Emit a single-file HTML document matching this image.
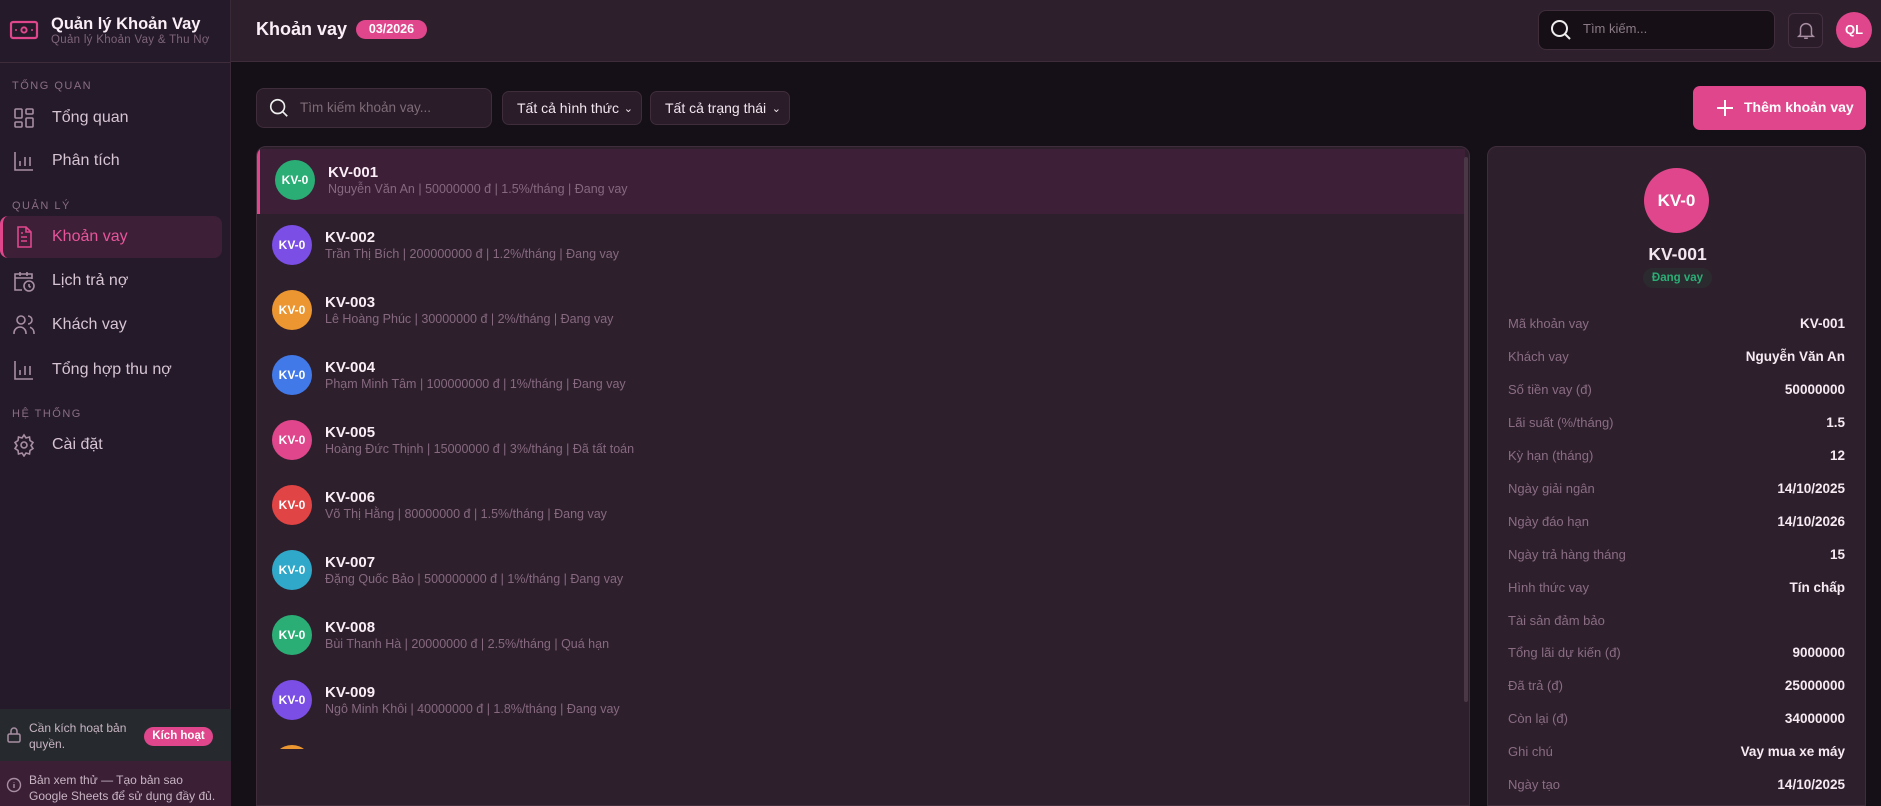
<!DOCTYPE html>
<html style="overflow:hidden;height:806px"><head><meta charset="utf-8"><style>
*{box-sizing:border-box;margin:0;padding:0}
body{width:1881px;height:806px;overflow:hidden;background:#151017;font-family:"Liberation Sans","DejaVu Sans",sans-serif;color:#f3e6ef;position:relative}
.abs{position:absolute}
.side{left:0;top:0;width:231px;height:806px;background:#241a2a;border-right:1px solid #3a2a38}
.sec{position:absolute;left:12px;font-size:11px;letter-spacing:1.5px;color:#8a6d83}
.nav{position:absolute;left:12px;font-size:16px;color:#d7c4d2;display:flex;align-items:center;gap:16px}
.nav svg{width:24px;height:24px;fill:none;stroke:#a88ea2;stroke-width:1.6}
.hdr{left:231px;top:0;width:1650px;height:62px;background:#2e1f2d;border-bottom:1px solid #3e2c3b}
.inp{background:#2a1c29;border:1px solid #3f2d3c;border-radius:8px}
.sel{background:#2a1c29;border:1px solid #3f2d3c;border-radius:7px;font-size:14px;color:#f3e6ef;display:flex;align-items:center;padding-left:14px}
.panel{background:#2e1f2d;border:1px solid #3f2d3c;border-radius:10px}
.row{position:absolute;left:0;width:1208px;height:65px}
.av{position:absolute;width:40px;height:40px;border-radius:50%;color:#fff;font-weight:bold;font-size:12px;display:flex;align-items:center;justify-content:center}
.t1{position:absolute;font-weight:bold;font-size:15px;color:#fbeef6}
.t2{position:absolute;font-size:12.5px;color:#86697f}
.dl{position:absolute;left:20px;font-size:13px;color:#8a6d83}
.dv{position:absolute;right:20px;font-size:13.5px;font-weight:bold;color:#f7eaf2}
</style></head><body>
<div class="abs side">
 <svg class="abs" style="left:9px;top:19px" width="30" height="22" viewBox="0 0 30 22"><rect x="2" y="3" width="26" height="16" rx="2" fill="none" stroke="#e0468c" stroke-width="2.2"/><circle cx="15" cy="11" r="2.6" fill="none" stroke="#e0468c" stroke-width="2"/><circle cx="7" cy="11" r="1" fill="#e0468c"/><circle cx="23" cy="11" r="1" fill="#e0468c"/></svg>
 <div class="abs" style="left:51px;top:15px;font-size:16.5px;font-weight:bold;color:#fbeef6">Quản lý Khoản Vay</div>
 <div class="abs" style="left:51px;top:34px;font-size:11.5px;color:#7e6478;letter-spacing:0.3px">Quản lý Khoản Vay &amp; Thu Nợ</div>
 <div class="abs" style="left:0;top:62px;width:231px;border-top:1px solid #3e2c3b"></div>
 <div class="sec" style="top:80px">TỔNG QUAN</div>
 <div class="nav" style="top:106px"><svg viewBox="0 0 24 24"><rect x="3" y="3" width="7" height="9" rx="1"/><rect x="14" y="3" width="7" height="5" rx="1"/><rect x="14" y="12" width="7" height="9" rx="1"/><rect x="3" y="16" width="7" height="5" rx="1"/></svg>Tổng quan</div>
 <div class="nav" style="top:149px"><svg viewBox="0 0 24 24"><path d="M3 3v18h18M8 17v-5M13 17V8M18 17v-9"/></svg>Phân tích</div>
 <div class="sec" style="top:200px">QUẢN LÝ</div>
 <div class="abs" style="left:0;top:216px;width:222px;height:42px;background:#3d1f38;border-radius:8px;border-left:3px solid #e0468c"></div>
 <div class="nav" style="top:225px;color:#e8559a"><svg viewBox="0 0 24 24" style="stroke:#e0468c"><path d="M6 2h8l5 5v15H6zM14 2v5h5M9 12h6M9 16h6M9 8h2"/></svg>Khoản vay</div>
 <div class="nav" style="top:269px"><svg viewBox="0 0 24 24"><path d="M20 10V5H3v16h7M3 9h17M8 3v4M15 3v4"/><circle cx="17" cy="17" r="5"/><path d="M17 15v2l1.5 1.5"/></svg>Lịch trả nợ</div>
 <div class="nav" style="top:313px"><svg viewBox="0 0 24 24"><circle cx="9" cy="7" r="4"/><path d="M2 21v-1a6 6 0 0 1 12 0v1M16 3a4 4 0 0 1 0 8M22 21v-1a6 6 0 0 0-4-5.7"/></svg>Khách vay</div>
 <div class="nav" style="top:358px"><svg viewBox="0 0 24 24"><path d="M3 3v18h18M8 17v-5M13 17V8M18 17v-9"/></svg>Tổng hợp thu nợ</div>
 <div class="sec" style="top:408px">HỆ THỐNG</div>
 <div class="nav" style="top:433px"><svg viewBox="0 0 24 24"><circle cx="12" cy="12" r="3"/><path d="M12 2l2 3 3.5-1 .5 3.5 3 2-2 3 2 3-3 2-.5 3.5-3.5-1-2 3-2-3-3.5 1-.5-3.5-3-2 2-3-2-3 3-2 .5-3.5 3.5 1z"/></svg>Cài đặt</div>
 <div class="abs" style="left:0;top:709px;width:231px;height:52px;background:#262a2f"></div>
 <svg class="abs" style="left:6px;top:726px" width="16" height="18" viewBox="0 0 16 18" fill="none" stroke="#a88ea2" stroke-width="1.5"><rect x="2" y="8" width="12" height="8" rx="1.5"/><path d="M5 8V5a3 3 0 0 1 6 0v3"/></svg>
 <div class="abs" style="left:29px;top:720px;font-size:12px;line-height:16px;color:#c8b4c3">Cần kích hoạt bản<br>quyền.</div>
 <div class="abs" style="left:144px;top:727px;width:69px;height:19px;border-radius:10px;background:#e0468c;color:#fff;font-size:11.5px;font-weight:bold;text-align:center;line-height:19px">Kích hoạt</div>
 <div class="abs" style="left:0;top:761px;width:231px;height:45px;background:#3a1f35"></div>
 <svg class="abs" style="left:6px;top:777px" width="16" height="16" viewBox="0 0 16 16" fill="none" stroke="#a88ea2" stroke-width="1.4"><circle cx="8" cy="8" r="6.5"/><path d="M8 7v4M8 5v.5"/></svg>
 <div class="abs" style="left:29px;top:772px;font-size:12px;line-height:16px;color:#c8b4c3">Bản xem thử — Tạo bản sao<br>Google Sheets để sử dụng đầy đủ.</div>
</div>
<div class="abs hdr">
 <div class="abs" style="left:25px;top:19px;font-size:18px;font-weight:bold;color:#fbeef6">Khoản vay</div>
 <div class="abs" style="left:125px;top:20px;width:71px;height:19px;border-radius:10px;background:#e0468c;color:#fff;font-size:12.5px;font-weight:bold;text-align:center;line-height:19px">03/2026</div>
 <div class="abs" style="left:1307px;top:10px;width:237px;height:40px;background:#161016;border:1px solid #3f2d3c;border-radius:8px"></div>
 <svg class="abs" style="left:1318px;top:18px" width="24" height="24" viewBox="0 0 24 24" fill="none" stroke="#eee" stroke-width="2"><circle cx="10.5" cy="10.5" r="7.5"/><path d="M16 16l5 5"/></svg>
 <div class="abs" style="left:1352px;top:21px;font-size:13px;color:#8a7a86">Tìm kiếm...</div>
 <div class="abs" style="left:1557px;top:13px;width:35px;height:35px;border:1px solid #433040;border-radius:6px;background:#2a1c29"></div>
 <svg class="abs" style="left:1564px;top:19px" width="22" height="22" viewBox="0 0 24 24" fill="none" stroke="#a88ea2" stroke-width="1.6"><path d="M6 17V11a6 6 0 0 1 12 0v6l2 2H4zM10 21h4"/></svg>
 <div class="abs" style="left:1605px;top:12px;width:36px;height:36px;border-radius:50%;background:#e0468c;color:#fff;font-weight:bold;font-size:13px;text-align:center;line-height:36px">QL</div>
</div>
<div class="abs inp" style="left:256px;top:88px;width:236px;height:40px"></div>
<svg class="abs" style="left:268px;top:97px" width="22" height="22" viewBox="0 0 24 24" fill="none" stroke="#eee" stroke-width="1.8"><circle cx="10.5" cy="10.5" r="7.5"/><path d="M16 16l5 5"/></svg>
<div class="abs" style="left:300px;top:100px;font-size:13.5px;color:#7e6b78">Tìm kiếm khoản vay...</div>
<div class="abs sel" style="left:502px;top:91px;width:140px;height:34px">Tất cả hình thức<span style="position:absolute;right:8px;font-size:11px">⌄</span></div>
<div class="abs sel" style="left:650px;top:91px;width:140px;height:34px">Tất cả trạng thái<span style="position:absolute;right:8px;font-size:11px">⌄</span></div>
<div class="abs" style="left:1693px;top:86px;width:173px;height:44px;background:#e0468c;border-radius:7px"></div>
<svg class="abs" style="left:1716px;top:99px" width="18" height="18" viewBox="0 0 18 18" stroke="#fff" stroke-width="2"><path d="M9 1v16M1 9h16"/></svg>
<div class="abs" style="left:1744px;top:99px;font-size:14px;font-weight:bold;color:#fff">Thêm khoản vay</div>

<div class="abs panel" style="left:256px;top:146px;width:1214px;height:660px;overflow:hidden;border-bottom-left-radius:0;border-bottom-right-radius:0">
 <div class="row" style="top:2px;background:#3d1f38;border-left:3px solid #e0468c"></div>
 <div class="abs" style="left:1207px;top:10px;width:4px;height:545px;background:#4a3847;border-radius:2px"></div>
 <div class="av" style="left:18px;top:13px;background:#2bae76">KV-0</div><div class="t1" style="left:71px;top:17px">KV-001</div><div class="t2" style="left:71px;top:35px">Nguyễn Văn An | 50000000 đ | 1.5%/tháng | Đang vay</div>
 <div class="av" style="left:15px;top:78px;background:#7b4ee6">KV-0</div><div class="t1" style="left:68px;top:82px">KV-002</div><div class="t2" style="left:68px;top:100px">Trần Thị Bích | 200000000 đ | 1.2%/tháng | Đang vay</div>
 <div class="av" style="left:15px;top:143px;background:#eb9630">KV-0</div><div class="t1" style="left:68px;top:147px">KV-003</div><div class="t2" style="left:68px;top:165px">Lê Hoàng Phúc | 30000000 đ | 2%/tháng | Đang vay</div>
 <div class="av" style="left:15px;top:208px;background:#4279e8">KV-0</div><div class="t1" style="left:68px;top:212px">KV-004</div><div class="t2" style="left:68px;top:230px">Phạm Minh Tâm | 100000000 đ | 1%/tháng | Đang vay</div>
 <div class="av" style="left:15px;top:273px;background:#e0468c">KV-0</div><div class="t1" style="left:68px;top:277px">KV-005</div><div class="t2" style="left:68px;top:295px">Hoàng Đức Thịnh | 15000000 đ | 3%/tháng | Đã tất toán</div>
 <div class="av" style="left:15px;top:338px;background:#e04444">KV-0</div><div class="t1" style="left:68px;top:342px">KV-006</div><div class="t2" style="left:68px;top:360px">Võ Thị Hằng | 80000000 đ | 1.5%/tháng | Đang vay</div>
 <div class="av" style="left:15px;top:403px;background:#30a8c9">KV-0</div><div class="t1" style="left:68px;top:407px">KV-007</div><div class="t2" style="left:68px;top:425px">Đặng Quốc Bảo | 500000000 đ | 1%/tháng | Đang vay</div>
 <div class="av" style="left:15px;top:468px;background:#2bae76">KV-0</div><div class="t1" style="left:68px;top:472px">KV-008</div><div class="t2" style="left:68px;top:490px">Bùi Thanh Hà | 20000000 đ | 2.5%/tháng | Quá hạn</div>
 <div class="av" style="left:15px;top:533px;background:#7b4ee6">KV-0</div><div class="t1" style="left:68px;top:537px">KV-009</div><div class="t2" style="left:68px;top:555px">Ngô Minh Khôi | 40000000 đ | 1.8%/tháng | Đang vay</div>
 <div class="abs" style="left:15px;top:598px;width:40px;height:40px;border-radius:50%;background:#eb9630;clip-path:inset(0 0 36px 0)"></div>
</div>

<div class="abs panel" style="left:1487px;top:146px;width:379px;height:660px;border-bottom-left-radius:0;border-bottom-right-radius:0">
 <div class="abs" style="left:156px;top:21px;width:65px;height:65px;border-radius:50%;background:#e0468c;color:#fff;font-weight:bold;font-size:17px;text-align:center;line-height:65px">KV-0</div>
 <div class="abs" style="left:0;width:379px;top:97px;text-align:center;font-size:17.5px;font-weight:bold;color:#f3e6ef">KV-001</div>
 <div class="abs" style="left:155px;top:121px;width:69px;height:20px;border-radius:10px;background:#2b2a2e;color:#2bae76;font-size:11.5px;font-weight:bold;text-align:center;line-height:20px">Đang vay</div>
 <div class="dl" style="top:169px">Mã khoản vay</div><div class="dv" style="top:169px">KV-001</div>
 <div class="dl" style="top:202px">Khách vay</div><div class="dv" style="top:202px">Nguyễn Văn An</div>
 <div class="dl" style="top:235px">Số tiền vay (đ)</div><div class="dv" style="top:235px">50000000</div>
 <div class="dl" style="top:268px">Lãi suất (%/tháng)</div><div class="dv" style="top:268px">1.5</div>
 <div class="dl" style="top:301px">Kỳ hạn (tháng)</div><div class="dv" style="top:301px">12</div>
 <div class="dl" style="top:334px">Ngày giải ngân</div><div class="dv" style="top:334px">14/10/2025</div>
 <div class="dl" style="top:367px">Ngày đáo hạn</div><div class="dv" style="top:367px">14/10/2026</div>
 <div class="dl" style="top:400px">Ngày trả hàng tháng</div><div class="dv" style="top:400px">15</div>
 <div class="dl" style="top:433px">Hình thức vay</div><div class="dv" style="top:433px">Tín chấp</div>
 <div class="dl" style="top:466px">Tài sản đảm bảo</div>
 <div class="dl" style="top:498px">Tổng lãi dự kiến (đ)</div><div class="dv" style="top:498px">9000000</div>
 <div class="dl" style="top:531px">Đã trả (đ)</div><div class="dv" style="top:531px">25000000</div>
 <div class="dl" style="top:564px">Còn lại (đ)</div><div class="dv" style="top:564px">34000000</div>
 <div class="dl" style="top:597px">Ghi chú</div><div class="dv" style="top:597px">Vay mua xe máy</div>
 <div class="dl" style="top:630px">Ngày tạo</div><div class="dv" style="top:630px">14/10/2025</div>
</div>
</body></html>
